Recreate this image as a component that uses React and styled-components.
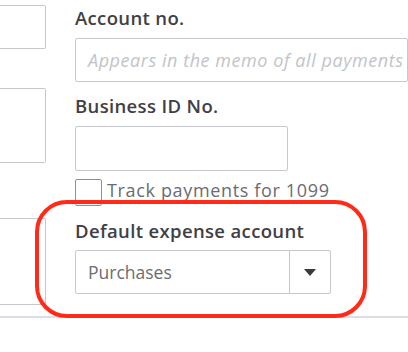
import React from "react";
import styled, { createGlobalStyle } from "styled-components";

const Global = createGlobalStyle`
  html, body { margin: 0; padding: 0; background: #ffffff; }
  body { width: 408px; height: 352px; overflow: hidden; font-family: "Open Sans", "Liberation Sans", sans-serif; }
`;

const Page = styled.div`
  position: relative;
  width: 408px;
  height: 352px;
  overflow: hidden;
`;

const Section = styled.div`
  display: grid;
  grid-template-columns: 46px 1fr;
  column-gap: 29px;
  height: 318px;
  border-bottom: 2px solid #dcdde0;
  box-sizing: border-box;
`;

const LeftCol = styled.div`
  display: flex;
  flex-direction: column;
`;

const StubBox = styled.div`
  height: ${(p) => p.$h}px;
  margin-top: ${(p) => p.$mt}px;
  border: 1.5px solid #c6c8cc;
  border-left: none;
  border-radius: 0 2px 2px 0;
  box-sizing: border-box;
`;

const RightCol = styled.div`
  display: flex;
  flex-direction: column;
  padding-top: 6px;
`;

const Label = styled.div`
  font-size: 18.5px;
  font-weight: 600;
  line-height: 24px;
  color: #3f4045;
  letter-spacing: 0.35px;
  white-space: nowrap;
  margin-top: ${(p) => p.$mt || 0}px;
`;

const Field = styled.div`
  height: ${(p) => p.$h || 44}px;
  width: ${(p) => p.$w}px;
  margin-top: 8px;
  border: 1.5px solid #c6c8cc;
  border-radius: 2px;
  box-sizing: border-box;
  display: flex;
  align-items: center;
  padding-left: 12px;
  overflow: hidden;
`;

const Placeholder = styled.span`
  font-size: 18px;
  font-style: italic;
  color: #c2c4c8;
  white-space: nowrap;
  letter-spacing: 0.55px;
`;

const CheckRow = styled.div`
  display: flex;
  align-items: flex-start;
  gap: 5px;
  margin-top: 7px;
`;

const CheckBox = styled.div`
  width: 27px;
  height: 27px;
  margin-top: 1px;
  border: 1.5px solid #8d9096;
  border-radius: 2px;
  box-sizing: border-box;
`;

const CheckText = styled.span`
  font-size: 18px;
  line-height: 24px;
  color: #6b6c72;
  white-space: nowrap;
  letter-spacing: 0.65px;
`;

const Select = styled.div`
  display: flex;
  width: 256px;
  height: 44px;
  margin-top: 7px;
  border: 1.5px solid #c6c8cc;
  border-radius: 2px;
  box-sizing: border-box;
`;

const SelectValue = styled.div`
  flex: 1;
  display: flex;
  align-items: center;
  padding-left: 12px;
  font-size: 17.5px;
  color: #6b6c72;
  border-right: 1.5px solid #c6c8cc;
`;

const SelectButton = styled.div`
  width: 40px;
  display: flex;
  align-items: center;
  justify-content: center;
`;

const Highlight = styled.div`
  position: absolute;
  left: 35px;
  top: 200px;
  width: 332px;
  height: 118px;
  border: 4px solid #ff2a17;
  border-radius: 32px;
  box-sizing: border-box;
  pointer-events: none;
`;

export default function App() {
  return (
    <>
      <Global />
      <Page>
        <Section>
          <LeftCol>
            <StubBox $mt={5} $h={44} />
            <StubBox $mt={39} $h={75} />
            <StubBox $mt={55} $h={87} />
          </LeftCol>
          <RightCol>
            <Label>Account no.</Label>
            <Field $w={333}>
              <Placeholder>Appears in the memo of all payments</Placeholder>
            </Field>
            <Label $mt={12}>Business ID No.</Label>
            <Field $w={213} $h={45} />
            <CheckRow>
              <CheckBox />
              <CheckText>Track payments for 1099</CheckText>
            </CheckRow>
            <Label $mt={13}>Default expense account</Label>
            <Select>
              <SelectValue>Purchases</SelectValue>
              <SelectButton>
                <svg width="12" height="7" viewBox="0 0 12 7">
                  <path d="M0 0 H12 L6 7 Z" fill="#393a3d" />
                </svg>
              </SelectButton>
            </Select>
          </RightCol>
        </Section>
        <Highlight />
      </Page>
    </>
  );
}
